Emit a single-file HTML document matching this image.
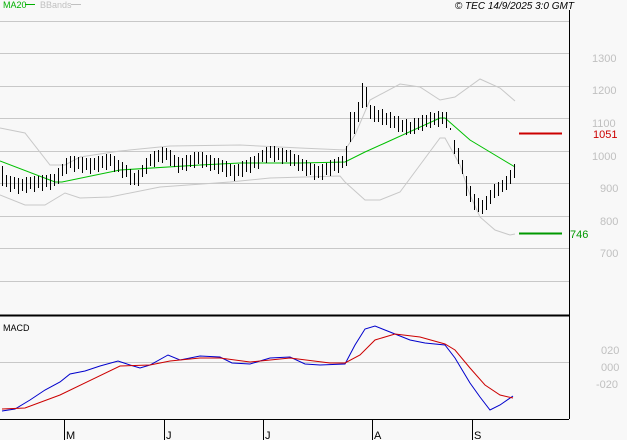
<!DOCTYPE html>
<html><head><meta charset="utf-8"><style>
html,body{margin:0;padding:0;background:#f8f8f8;}
svg{display:block;font-family:"Liberation Sans",sans-serif;}
</style></head><body>
<svg width="627" height="440" viewBox="0 0 627 440" xmlns="http://www.w3.org/2000/svg">
<rect width="627" height="440" fill="#f8f8f8"/>
<g stroke="#c8c8c8" stroke-width="1">
<line x1="0" y1="21.5" x2="569" y2="21.5"/>
<line x1="0" y1="53.5" x2="569" y2="53.5"/>
<line x1="0" y1="86.5" x2="569" y2="86.5"/>
<line x1="0" y1="118.5" x2="569" y2="118.5"/>
<line x1="0" y1="151.5" x2="569" y2="151.5"/>
<line x1="0" y1="183.5" x2="569" y2="183.5"/>
<line x1="0" y1="216.5" x2="569" y2="216.5"/>
<line x1="0" y1="248.5" x2="569" y2="248.5"/>
<line x1="0" y1="281.5" x2="569" y2="281.5"/>
<line x1="0" y1="362.5" x2="569" y2="362.5"/>
</g>
<line x1="569.5" y1="10" x2="569.5" y2="419" stroke="#000"/>
<line x1="0" y1="315.5" x2="569" y2="315.5" stroke="#000" stroke-width="2"/>
<line x1="0" y1="419.5" x2="569" y2="419.5" stroke="#000"/>
<g stroke="#000"><line x1="64.5" y1="419" x2="64.5" y2="440"/><line x1="164.5" y1="419" x2="164.5" y2="440"/><line x1="263.5" y1="419" x2="263.5" y2="440"/><line x1="372.5" y1="419" x2="372.5" y2="440"/><line x1="472.5" y1="419" x2="472.5" y2="440"/></g>
<g font-size="11" fill="#000"><text x="66" y="439">M</text><text x="166" y="439">J</text><text x="265" y="439">J</text><text x="374" y="439">A</text><text x="474" y="439">S</text></g>
<g font-size="11" fill="#c0c0c0"><text x="592" y="62">1300</text><text x="592" y="94">1200</text><text x="592" y="127">1100</text><text x="592" y="160">1000</text><text x="600" y="192">900</text><text x="600" y="225">800</text><text x="600" y="257">700</text>
<text x="601" y="354">020</text><text x="601" y="371">000</text><text x="596" y="388">-020</text></g>
<text x="3" y="8" font-size="9" fill="#00b000">MA20</text><line x1="25" y1="4.5" x2="35" y2="4.5" stroke="#00b000"/>
<text x="40" y="8" font-size="9" fill="#c0c0c0">BBands</text><line x1="71" y1="4.5" x2="81" y2="4.5" stroke="#c0c0c0"/>
<text x="574" y="9" font-size="10" font-style="italic" text-anchor="end" fill="#000">© TEC 14/9/2025 3:0 GMT</text>
<text x="3" y="331" font-size="9" fill="#000">MACD</text>
<line x1="519" y1="133.5" x2="562" y2="133.5" stroke="#cc0000" stroke-width="2"/>
<text x="593" y="138" font-size="11" fill="#cc0000">1051</text>
<line x1="519" y1="233.5" x2="562" y2="233.5" stroke="#009900" stroke-width="2"/>
<text x="570" y="238" font-size="11" fill="#009900">746</text>
<g fill="none" stroke="#c8c8c8" stroke-width="1">
<polyline points="0,128 25,133 50,165 65,165 80,157 120,151 170,146 240,145 300,148 345,150 355,135 370,100 400,84 420,87 440,100 455,97 480,79 500,88 515,101"/>
<polyline points="0,195 25,205 45,205 65,193 80,198 110,197 160,187 230,182 270,178 340,176 345,182 365,200 380,200 400,192 420,165 440,138 445,138 460,165 470,195 480,217 495,230 510,235 515,234"/>
</g>
<polyline fill="none" stroke="#00c000" points="0,161 55,182 62,182 120,170 200,165 240,163 300,163 345,162 365,152 385,143 440,118 445,118 470,140 515,167"/>
<path fill="none" stroke="#000" stroke-width="1" d="
M2.5 166v20M6.5 175v12M10.5 176v16M14.5 177v12M18.5 178v16M22.5 179v12M26.5 177v16M30.5 177v12M34.5 176v16M38.5 176v12M42.5 175v16M46.5 175v12M50.5 174v16M54.5 174v12M58.5 168v16M62.5 164v12M66.5 158v16M70.5 156v12M74.5 156v16M78.5 157v12M82.5 157v16M86.5 158v12M90.5 158v16M94.5 158v12M98.5 156v16M102.5 156v12M106.5 154v16M110.5 154v12M114.5 156v16M118.5 160v12M122.5 162v16M126.5 165v12M130.5 169v16M134.5 173v12M138.5 170v16M142.5 165v12M146.5 158v16M150.5 154v12M154.5 151v16M158.5 150v12M162.5 147v16M166.5 148v12M170.5 150v16M174.5 155v12M178.5 157v16M182.5 158v12M186.5 155v16M190.5 155v12M194.5 152v16M198.5 152v12M202.5 152v16M206.5 155v12M210.5 155v16M214.5 158v12M218.5 158v16M222.5 160v12M226.5 161v16M230.5 164v12M234.5 165v16M238.5 164v12M242.5 161v16M246.5 160v12M250.5 157v16M254.5 156v12M258.5 153v16M262.5 150v12M266.5 147v16M270.5 146v12M274.5 146v16M278.5 148v12M282.5 148v16M286.5 150v12M290.5 150v16M294.5 154v12M298.5 155v16M302.5 159v12M306.5 160v16M310.5 163v12M314.5 164v16M318.5 166v12M322.5 164v16M326.5 163v12M330.5 160v16M334.5 159v12M338.5 157v16M342.5 156v12M346.5 146v20M350.5 112v30M354.5 112v22M358.5 102v20M362.5 83v25M366.5 87v20M370.5 105v14M374.5 106v16M378.5 110v12M382.5 109v16M386.5 113v12M390.5 112v16M394.5 116v12M398.5 116v16M402.5 120v12M406.5 119v16M410.5 122v12M414.5 118v16M418.5 118v12M422.5 115v16M426.5 115v12M430.5 112v16M434.5 113v12M438.5 111v16M442.5 112v12M446.5 112v16M450.5 128v2M454.5 140v14M458.5 148v16M462.5 160v14M466.5 176v20M470.5 186v16M474.5 194v16M478.5 198v14M482.5 200v14M486.5 196v14M490.5 190v14M494.5 184v14M498.5 182v14M502.5 180v12M506.5 176v14M510.5 170v14M514.5 164v14"/>
<polyline fill="none" stroke="#0000cc" points="2,411 15,409 30,400 45,390 60,382 70,374 85,371 100,366 118,361 130,365 140,368 150,365 168,355 180,360 200,356 220,357 232,363 250,364 270,358 290,357 305,364 320,365 345,364 355,345 365,329 375,326 390,332 410,340 425,343 445,345 455,358 470,383 480,397 490,410 500,405 513,396"/>
<polyline fill="none" stroke="#cc0000" points="2,409 25,408 60,395 120,366 150,365 170,361 200,358 220,358 250,362 290,358 330,363 345,363 360,355 375,340 395,334 420,337 445,344 455,350 470,368 485,385 500,395 513,398"/>
</svg>
</body></html>
